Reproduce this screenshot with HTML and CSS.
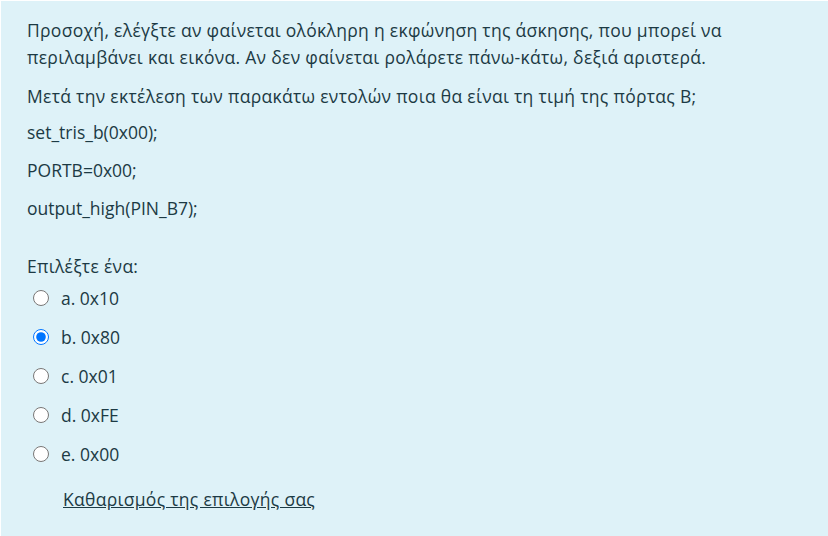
FILE: index.html
```html
<!DOCTYPE html>
<html lang="el">
<head>
<meta charset="utf-8">
<link rel="stylesheet" href="styles.css">
</head>
<body>
<div class="formulation">
  <div class="qtext">
    <p class="intro greek">Προσοχή, ελέγξτε αν φαίνεται ολόκληρη η εκφώνηση της άσκησης, που μπορεί να περιλαμβάνει και εικόνα. Αν δεν φαίνεται ρολάρετε πάνω-κάτω, δεξιά αριστερά.</p>
    <p class="line first greek">Μετά την εκτέλεση των παρακάτω εντολών ποια θα είναι τη τιμή της πόρτας Β;</p>
    <p class="line">set_tris_b(0x00);</p>
    <p class="line">PORTB=0x00;</p>
    <p class="line">output_high(PIN_B7);</p>
  </div>
  <div class="ablock">
    <div class="prompt greek">Επιλέξτε ένα:</div>
    <div class="answers">
      <label class="opt"><input type="radio" name="q"><span>a. 0x10</span></label>
      <label class="opt"><input type="radio" name="q" checked><span>b. 0x80</span></label>
      <label class="opt"><input type="radio" name="q"><span>c. 0x01</span></label>
      <label class="opt"><input type="radio" name="q"><span>d. 0xFE</span></label>
      <label class="opt"><input type="radio" name="q"><span>e. 0x00</span></label>
    </div>
    <a class="clear greek" href="#">Καθαρισμός της επιλογής σας</a>
  </div>
</div>
</body>
</html>
```

FILE: styles.css
```css
html, body {
  margin: 0;
  padding: 0;
  background: #ffffff;
}
body {
  padding: 1px 0 0 1px;
  font-family: "Open Sans", "Noto Sans", sans-serif;
  font-size: 17.5px;
  color: #1c3a44;
}
.greek {
  letter-spacing: 0.3px;
}
.formulation {
  background: #def2f8;
  height: 535px;
  box-sizing: border-box;
  padding: 16px 26px 0 26px;
}
.qtext p {
  margin: 0;
  line-height: 27px;
}
.qtext .intro {
  margin-bottom: 12px;
}
.qtext .line {
  margin-bottom: 11px;
}
.qtext .line.first {
  margin-bottom: 9px;
}
.ablock {
  margin-top: 31px;
}
.prompt {
  line-height: 27px;
  margin-bottom: 4px;
}
.answers {
  display: flex;
  flex-direction: column;
  gap: 12px;
}
.opt {
  display: flex;
  align-items: center;
  height: 27px;
  padding-left: 6px;
}
.opt input {
  width: 16px;
  height: 16px;
  margin: 0 12px 0 0;
}
.clear {
  display: inline-block;
  margin-top: 19px;
  margin-left: 36px;
  line-height: 27px;
  color: #1c3a44;
  text-decoration: underline;
}
```
